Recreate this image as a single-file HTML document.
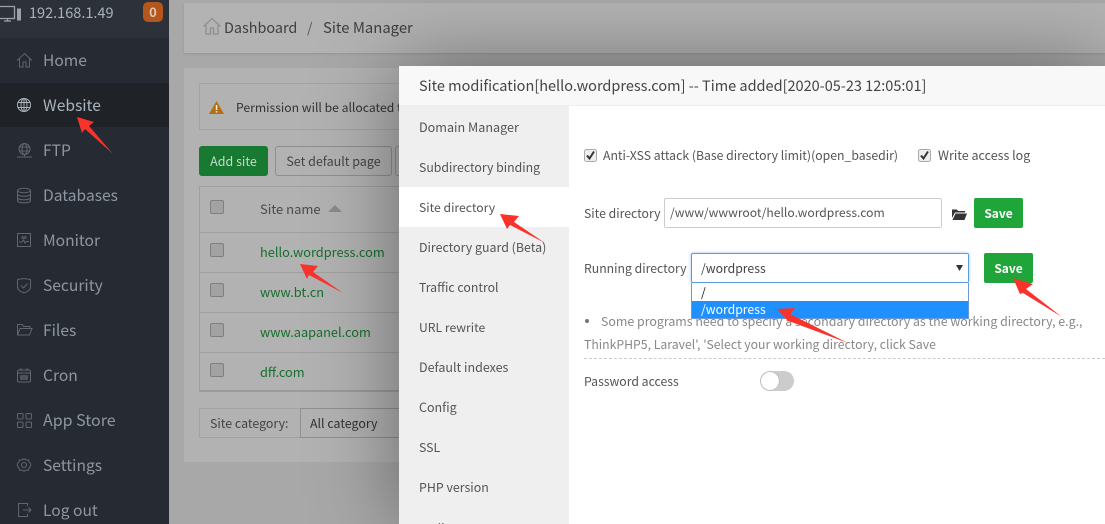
<!DOCTYPE html>
<html><head><meta charset="utf-8">
<style>
html,body{margin:0;padding:0;width:1105px;height:524px;overflow:hidden;background:#a9a9a9}
body{font-family:"Noto Sans CJK SC","Liberation Sans",sans-serif;font-size:13px;position:relative}
.a,.t{position:absolute}
.t{white-space:nowrap;line-height:20px;height:20px}
.nav{left:43px;font-size:15.6px;color:#8d96a0}
.menu{left:419px;font-size:12.3px;color:#555}
.cb{position:absolute;width:12px;height:12px;border:1px solid #808080;border-radius:2px;background:#a2a2a2}
.site{left:260px;color:#166f2c;font-size:12.8px}
.lab{color:#555;font-size:12.25px}
svg{position:absolute;overflow:visible}
.ic{fill:none;stroke:#60666d;stroke-width:1}
</style></head><body>
<!-- main -->
<div class="a" style="left:169px;top:0;width:936px;height:524px;background:#a8a8a8"></div>
<div class="a" style="left:184px;top:3px;width:921px;height:50px;background:#b3b3b3;box-shadow:0 1px 2px rgba(0,0,0,.12)"></div>
<svg fill="none" stroke="#8d8d8d" stroke-width="1.2" style="left:203px;top:18px" width="18" height="17"><path d="M.5 8.500 9 .5l8.500 8M3 7v9h4.500v-6h3v6H15V7"/></svg>
<div class="t" style="left:224px;top:18px;font-size:14.4px;color:#3f3f3f">Dashboard</div>
<div class="t" style="left:307px;top:18px;font-size:14px;color:#5a5a5a">/</div>
<div class="t" style="left:323px;top:18px;font-size:14.85px;color:#3f3f3f">Site Manager</div>

<div class="a" style="left:184px;top:68px;width:921px;height:394px;background:#b2b2b2"></div>
<div class="a" style="left:199px;top:83px;width:906px;height:47px;border:1px solid #a3a3a3;box-sizing:border-box"></div>
<svg style="left:209px;top:101px" width="15" height="13"><path d="M7.500 0 15 13H0z" fill="#b3700f"/><rect x="6.800" y="4" width="1.500" height="5" fill="#eee"/><rect x="6.800" y="10" width="1.500" height="1.500" fill="#eee"/></svg>
<div class="t" style="left:236px;top:97px;font-size:12.2px;color:#333">Permission will be allocated to</div>

<div class="a" style="left:199px;top:146px;width:69px;height:30px;background:#177a30;border-radius:3px;color:#c9d9cc;font-size:12.500px;line-height:30px;text-align:center">Add site</div>
<div class="a" style="left:275px;top:146px;width:115px;height:28px;border:1px solid #8f8f8f;border-radius:3px;color:#444;font-size:12.500px;line-height:28px;text-align:center">Set default page</div>
<div class="a" style="left:395px;top:146px;width:20px;height:28px;border:1px solid #8f8f8f;border-radius:3px"></div>

<div class="a" style="left:199px;top:186px;width:906px;height:206px;border-left:1px solid #9f9f9f;border-top:1px solid #9f9f9f;border-bottom:2px solid #9a9a9a;box-sizing:border-box"></div>
<div class="a" style="left:199px;top:232px;width:906px;height:1px;background:#9f9f9f"></div>
<div class="a" style="left:199px;top:272px;width:906px;height:1px;background:#9f9f9f"></div>
<div class="a" style="left:199px;top:312px;width:906px;height:1px;background:#9f9f9f"></div>
<div class="a" style="left:199px;top:352px;width:906px;height:1px;background:#9f9f9f"></div>
<div class="cb" style="left:210px;top:200px"></div>
<div class="cb" style="left:210px;top:243px"></div>
<div class="cb" style="left:210px;top:283px"></div>
<div class="cb" style="left:210px;top:323px"></div>
<div class="cb" style="left:210px;top:363px"></div>
<div class="t" style="left:260px;top:199px;font-size:13px;color:#4a4a4a">Site name</div>
<svg style="left:328px;top:205px" width="14" height="7"><path d="M7 0 14 7H0z" fill="#8a8a8a"/></svg>
<div class="t site" style="top:242px">hello.wordpress.com</div>
<div class="t site" style="top:282px">www.bt.cn</div>
<div class="t site" style="top:322px">www.aapanel.com</div>
<div class="t site" style="top:362px">dff.com</div>

<div class="a" style="left:199px;top:408px;width:300px;height:30px;border:1px solid #a3a3a3;box-sizing:border-box"></div>
<div class="a" style="left:300px;top:408px;width:200px;height:30px;border:1px solid #909090;box-sizing:border-box"></div>
<div class="t" style="left:210px;top:413px;font-size:12.4px;color:#444">Site category:</div>
<div class="t" style="left:310px;top:413px;font-size:12.4px;color:#333">All category</div>

<!-- modal -->
<div class="a" style="left:399px;top:66px;width:706px;height:458px;background:#fff;box-shadow:0 0 80px rgba(0,0,0,.42)"></div>
<div class="a" style="left:399px;top:66px;width:706px;height:40px;background:#f8f8f8;border-bottom:1px solid #eee;box-sizing:border-box"></div>
<div class="t" style="left:419px;top:76px;font-size:14.5px;color:#444">Site modification[hello.wordpress.com] -- Time added[2020-05-23 12:05:01]</div>
<div class="a" style="left:399px;top:106px;width:170px;height:418px;background:#efefef"></div>
<div class="a" style="left:399px;top:187px;width:170px;height:40px;background:#fff"></div>
<div class="t menu" style="top:117px;font-size:12.6px">Domain Manager</div>
<div class="t menu" style="top:157px">Subdirectory binding</div>
<div class="t menu" style="top:197px;font-size:12.2px">Site directory</div>
<div class="t menu" style="top:237px;font-size:12.4px">Directory guard (Beta)</div>
<div class="t menu" style="top:277px">Traffic control</div>
<div class="t menu" style="top:317px;font-size:12.2px">URL rewrite</div>
<div class="t menu" style="top:357px;font-size:12.5px">Default indexes</div>
<div class="t menu" style="top:397px;font-size:12.5px">Config</div>
<div class="t menu" style="top:437px">SSL</div>
<div class="t menu" style="top:477px;font-size:12.4px">PHP version</div>
<div class="t menu" style="top:518px;height:6px;overflow:hidden">Redirect</div>

<svg style="left:584px;top:149px" width="14" height="14"><rect x=".5" y=".5" width="12" height="12" rx="2" fill="#eee" stroke="#aaa"/><path d="M3 6.500 5.500 9.500 10 2.500" fill="none" stroke="#333" stroke-width="2"/></svg>
<div class="t lab" style="left:603px;top:145px">Anti-XSS attack (Base directory limit)(open_basedir)</div>
<svg style="left:918px;top:149px" width="14" height="14"><rect x=".5" y=".5" width="12" height="12" rx="2" fill="#eee" stroke="#aaa"/><path d="M3 6.500 5.500 9.500 10 2.500" fill="none" stroke="#333" stroke-width="2"/></svg>
<div class="t lab" style="left:938px;top:145px;font-size:12.5px">Write access log</div>

<div class="t lab" style="left:584px;top:203px">Site directory</div>
<div class="a" style="left:664px;top:198px;width:278px;height:30px;border:1px solid #ccc;border-radius:2px;box-sizing:border-box"></div>
<div class="t lab" style="left:670px;top:203px;font-size:12.15px">/www/wwwroot/hello.wordpress.com</div>
<svg style="left:952px;top:208px" width="15" height="12"><path d="M0 1.500h5l1 1.500h7v1.500H3L0 10z" fill="#333"/><path d="M3.500 5.500H15L12.500 12H0.500z" fill="#333"/></svg>
<div class="a" style="left:974px;top:198px;width:49px;height:30px;background:#20a53a;border-radius:2px;color:#fff;font-size:12px;font-weight:bold;line-height:32px;text-align:center">Save</div>

<div class="t lab" style="left:584px;top:258px">Running directory</div>
<div class="a" style="left:691px;top:253px;width:278px;height:30px;border:1px solid #5a9be6;box-shadow:0 0 3px #9cc5f2;border-radius:2px;box-sizing:border-box;background:#fff"></div>
<div class="t lab" style="left:701px;top:258px;color:#444">/wordpress</div>
<svg style="left:956px;top:265px" width="7" height="6"><path d="M0 0h7L3.500 6z" fill="#333"/></svg>
<div class="a" style="left:984px;top:253px;width:49px;height:30px;background:#20a53a;border-radius:2px;color:#fff;font-size:12px;font-weight:bold;line-height:32px;text-align:center">Save</div>

<div class="t" style="left:601px;top:311px;font-size:12.4px;color:#888">Some programs need to specify a secondary directory as the working directory, e.g.,</div>
<div class="a" style="left:585px;top:319px;width:4px;height:4px;border-radius:50%;background:#777"></div>
<div class="t" style="left:584px;top:334px;font-size:12.25px;color:#888">ThinkPHP5, Laravel', 'Select your working directory, click Save</div>
<div class="a" style="left:584px;top:358px;width:521px;border-top:1px dashed #ccc"></div>
<div class="t lab" style="left:584px;top:371px">Password access</div>
<div class="a" style="left:760px;top:371px;width:34px;height:20px;background:#ccc;border-radius:10px"></div>
<div class="a" style="left:761px;top:372px;width:18px;height:18px;background:#fff;border-radius:50%;box-shadow:0 0 1px #777"></div>

<!-- dropdown -->
<div class="a" style="left:691px;top:283px;width:278px;height:36px;border:1px solid #6f97d8;border-top:none;background:#fff;box-sizing:border-box"></div>
<div class="t" style="left:701px;top:283px;font-size:12.25px;color:#222;line-height:18px;height:18px">/</div>
<div class="a" style="left:692px;top:301px;width:276px;height:17px;background:#1e90ff"></div>
<div class="t" style="left:701px;top:300px;font-size:12.25px;color:#fff;line-height:18px;height:18px">/wordpress</div>

<!-- sidebar -->
<div class="a" style="left:0;top:0;width:169px;height:524px;background:#262b33"></div>
<div class="a" style="left:0;top:0;width:169px;height:38px;background:#2c313a"></div>
<div class="a" style="left:0;top:83px;width:169px;height:44px;background:#1f2227"></div>
<svg style="left:0;top:0" width="24" height="24" fill="none" stroke="#9aa2aa" stroke-width="1.3"><path d="M0 6.500h14.500v12H0M4 21h7M7.500 18.500v2.500"/><rect x="17" y="8.500" width="4" height="12" fill="#9aa2aa" stroke="none"/></svg>
<div class="t" style="left:29px;top:3px;font-size:14.5px;color:#a8b2bb">192.168.1.49</div>
<div class="a" style="left:143px;top:2px;width:20px;height:20px;border-radius:5px;background:#b5561c;color:#d8c8b8;font-size:13px;font-weight:bold;text-align:center;line-height:20px">0</div>

<div class="t nav" style="top:50px">Home</div>
<div class="t nav" style="top:95px;color:#a9b4be">Website</div>
<div class="t nav" style="top:140px">FTP</div>
<div class="t nav" style="top:185px">Databases</div>
<div class="t nav" style="top:230px">Monitor</div>
<div class="t nav" style="top:275px">Security</div>
<div class="t nav" style="top:320px">Files</div>
<div class="t nav" style="top:365px">Cron</div>
<div class="t nav" style="top:409px;font-size:16px">App Store</div>
<div class="t nav" style="top:455px">Settings</div>
<div class="t nav" style="top:500px;height:20px">Log out</div>

<svg class="ic" style="left:17px;top:53px" width="16" height="15"><path d="M0 7.500 7.500 .5 15 7.500M2.500 6v8h3.500v-5h3v5h3.500V6"/></svg>
<svg style="left:17px;top:98px" width="15" height="15" fill="none" stroke="#aab2ba" stroke-width="1"><circle cx="7" cy="7" r="6.500"/><ellipse cx="7" cy="7" rx="3" ry="6.500"/><path d="M.5 4.500h13M.5 9.500h13M7 .5v13"/></svg>
<svg class="ic" style="left:17px;top:143px" width="15" height="15"><circle cx="7.500" cy="6" r="5.500"/><ellipse cx="7.500" cy="6" rx="2.500" ry="5.500"/><path d="M2 4h11M2 8h11M7.500 11.500v2M0 14h15"/></svg>
<svg class="ic" style="left:17px;top:188px" width="15" height="15"><ellipse cx="7" cy="2.500" rx="6.500" ry="2.200"/><path d="M.5 2.500v10c0 3 13 3 13 0v-10M.5 6c0 3 13 3 13 0M.5 9.500c0 3 13 3 13 0"/></svg>
<svg class="ic" style="left:17px;top:233px" width="15" height="14"><rect x=".5" y=".5" width="13" height="13"/><path d="M2 9h3l1.500-2 1.500 3 1.500-1.500H12"/><rect x="4.500" y="3" width="5" height="3" fill="#4d5259" stroke="none"/></svg>
<svg class="ic" style="left:17px;top:278px" width="14" height="16"><path d="M.5 1.500 7 .5l6.500 1V9c0 3-3.500 5-6.500 6C4 14 .5 12 .5 9zM4 7.500l2.500 2.500L10.500 5.500"/></svg>
<svg class="ic" style="left:17px;top:324px" width="16" height="12"><path d="M.5 11V.5h5l1 2H13v2M.5 11h12l2.500-6.500H3z"/></svg>
<svg class="ic" style="left:17px;top:368px" width="14" height="15"><rect x=".5" y="2" width="13" height="12" rx="1.500"/><path d="M4 0v3M10 0v3M.5 5h13"/><path d="M3 7h8v5H3z" fill="#4d5259" stroke="none"/></svg>
<svg class="ic" style="left:17px;top:413px" width="15" height="15"><rect x=".5" y=".5" width="5.500" height="5.500" rx="1"/><rect x="9" y=".5" width="5.500" height="5.500" rx="1"/><rect x="9" y="9" width="5.500" height="5.500" rx="1"/><rect x=".5" y="9" width="5.500" height="5.500" rx="1"/></svg>
<svg class="ic" style="left:17px;top:458px" width="14" height="14"><circle cx="7" cy="7" r="2.500"/><path d="M7 .5 9 2l2.300-.3.800 2.300L13.700 6v2l-1.600 2-.8 2.300L9 12l-2 1.500L5 12l-2.300.3L1.900 10 .3 8V6l1.600-2 .8-2.300L5 2z"/></svg>
<svg class="ic" style="left:18px;top:503px" width="14" height="14"><path d="M9.500 3V.5H.5v13h9V11M5 7h8M10.500 4.500 13 7l-2.500 2.500"/></svg>

<!-- arrows -->
<svg style="left:0;top:0" width="1105" height="524" fill="#f9322c">
<path d="M77 117 94 122 89 126 113 154 85 129 82 133z"/>
<path d="M300 264 318 266 313 272 343 293 309 275 307 279z"/>
<path d="M500 214 519 216 514 222 545 243 510 225 507 229z"/>
<path d="M1013 278 1033 284 1026 289 1062 317 1023 293 1020 294z"/>
<path d="M777 309 795 308 790 314 848 343 786 320 790 323z"/>
</svg>
</body></html>
